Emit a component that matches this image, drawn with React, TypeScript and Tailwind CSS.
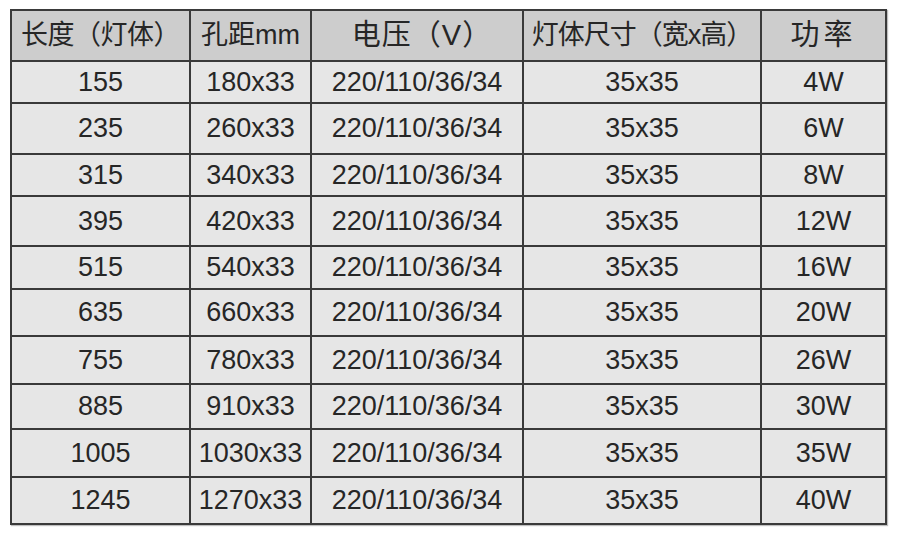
const headers = ['长度（灯体）', '孔距mm', '电压（V）', '灯体尺寸（宽x高）', '功率'];

const rows = [
  ['155', '180x33', '4W'],
  ['235', '260x33', '6W'],
  ['315', '340x33', '8W'],
  ['395', '420x33', '12W'],
  ['515', '540x33', '16W'],
  ['635', '660x33', '20W'],
  ['755', '780x33', '26W'],
  ['885', '910x33', '30W'],
  ['1005', '1030x33', '35W'],
  ['1245', '1270x33', '40W'],
];

// row heights measured from the reference, border to border
const heights = ['h-[42px]', 'h-[51px]', 'h-[42px]', 'h-[50px]', 'h-[43px]', 'h-[47px]', 'h-[48px]', 'h-[45px]', 'h-[48px]', 'h-[47px]'];

const cols = ['w-[179px]', 'w-[121px]', 'w-[212px]', 'w-[238px]', 'w-[125px]'];

const headerText = [
  'text-[27px] tracking-[-0.5px]',
  'text-[27px]',
  'text-[29px] tracking-[1px] pl-[10px]',
  'text-[27px] tracking-[-1px]',
  'text-[29px] tracking-[4px]',
];

export default function App() {
  return (
    <div
      className="h-[542px] w-[899px] bg-white pl-[10px] pt-[9px]"
      style={{ fontFamily: '"Liberation Sans", Arial, "Noto Sans CJK SC", sans-serif' }}
    >
      <table className="w-[877px] table-fixed border-collapse border-2 border-[#555] text-[27px] leading-none text-[#262626] shadow-[1px_1px_1px_rgba(0,0,0,0.25)]">
        <colgroup>
          {cols.map((c, i) => (
            <col key={i} className={c} />
          ))}
        </colgroup>
        <thead>
          <tr className="h-[51px] bg-[#cdcdcd]">
            {headers.map((h, i) => (
              <th
                key={h}
                className={`whitespace-nowrap border-2 border-[#3a3a3a] p-0 text-center font-normal ${headerText[i]}`}
              >
                {h}
              </th>
            ))}
          </tr>
        </thead>
        <tbody>
          {rows.map(([len, hole, power], i) => (
            <tr key={len} className={`${heights[i]} bg-[#e6e6e6]`}>
              <td className="border-2 border-[#3a3a3a] p-0 text-center">{len}</td>
              <td className="border-2 border-[#3a3a3a] p-0 text-center">{hole}</td>
              <td className="border-2 border-[#3a3a3a] p-0 text-center">220/110/36/34</td>
              <td className="border-2 border-[#3a3a3a] p-0 text-center">35x35</td>
              <td className="border-2 border-[#3a3a3a] p-0 text-center">{power}</td>
            </tr>
          ))}
        </tbody>
      </table>
    </div>
  );
}
